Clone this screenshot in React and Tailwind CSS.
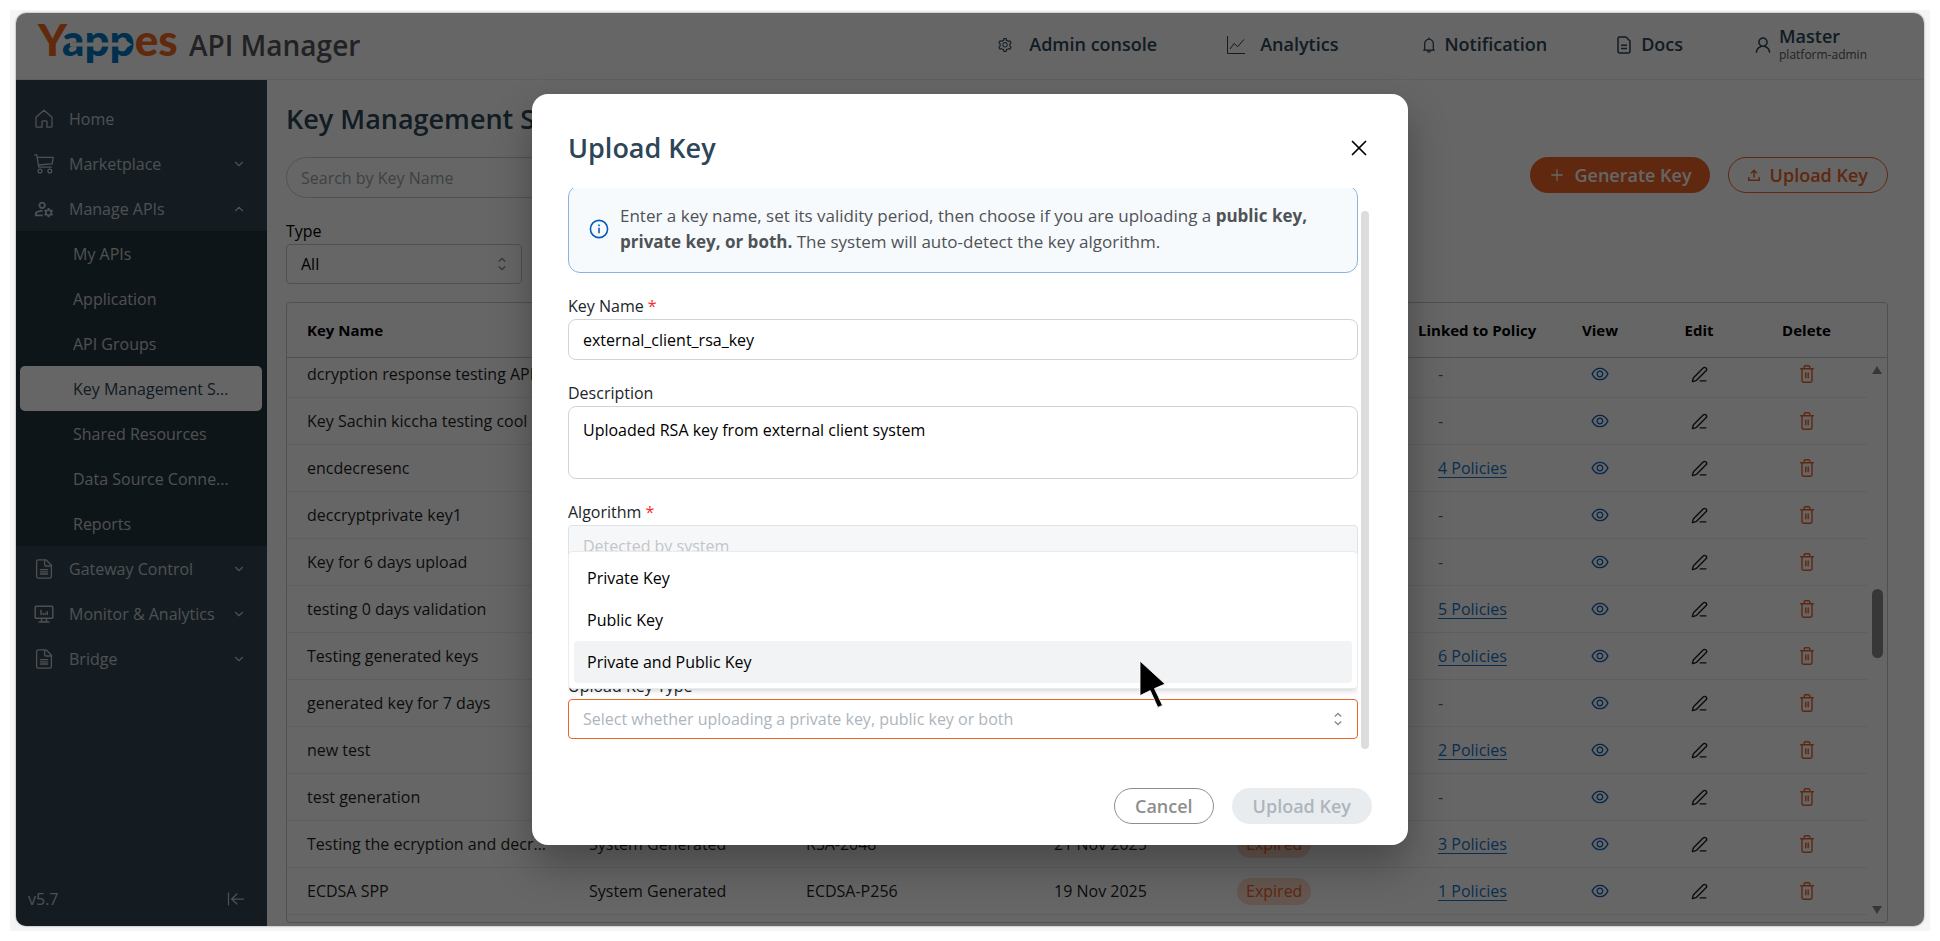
import React from 'react';
import { useState } from 'react';
import {
  AiOutlineBell,
  AiOutlineEye,
  AiOutlineSetting,
  AiOutlineUser,
} from 'react-icons/ai';
import { MdOutlineManageAccounts } from 'react-icons/md';
import { ArrowLeftToLine, ChevronDown, ChevronUp, PenLine, Plus, X } from 'lucide-react';

const manageItems = [
  'My APIs',
  'Application',
  'API Groups',
  'Key Management S...',
  'Shared Resources',
  'Data Source Conne...',
  'Reports',
];

const keys = [
  { name: 'dcryption response testing API', policies: 0 },
  { name: 'Key Sachin kiccha testing cool', policies: 0 },
  { name: 'encdecresenc', policies: 4 },
  { name: 'deccryptprivate key1', policies: 0 },
  { name: 'Key for 6 days upload', policies: 0 },
  { name: 'testing 0 days validation', policies: 5 },
  { name: 'Testing generated keys', policies: 6 },
  { name: 'generated key for 7 days', policies: 0 },
  { name: 'new test', policies: 2 },
  { name: 'test generation', policies: 0 },
  {
    name: 'Testing the ecryption and decr...',
    type: 'System Generated',
    algorithm: 'RSA-2048',
    expiry: '21 Nov 2025',
    status: 'Expired',
    policies: 3,
  },
  {
    name: 'ECDSA SPP',
    type: 'System Generated',
    algorithm: 'ECDSA-P256',
    expiry: '19 Nov 2025',
    status: 'Expired',
    policies: 1,
  },
];

const keyTypes = ['Private Key', 'Public Key', 'Private and Public Key'];

const rowGrid = 'mr-[19px] grid grid-cols-[302fr_217fr_248fr_183fr_201fr_113fr_98fr_100fr_119fr] items-center';

/* ---------- icons ---------- */

const HomeIcon = () => (
  <svg className="size-5" viewBox="0 0 20 20" fill="none" stroke="currentColor" strokeWidth="1.3" strokeLinejoin="round">
    <path d="M2 8.2 10 1.2l8 7V17a1.2 1.2 0 0 1-1.2 1.2H13v-5.4a1 1 0 0 0-1-1H9a1 1 0 0 0-1 1v5.4H3.2A1.2 1.2 0 0 1 2 17z" />
  </svg>
);

const CartIcon = () => (
  <svg className="size-5" viewBox="0 0 20 20" fill="none" stroke="currentColor" strokeWidth="1.3" strokeLinejoin="round" strokeLinecap="round">
    <path d="M.7.8h2l2.1 12.4h12.4M3.2 3.4h16l-1.1 6.4L4.3 11" />
    <circle cx="6" cy="17" r="1.9" />
    <circle cx="15.8" cy="17" r="1.9" />
  </svg>
);

const DocumentIcon = () => (
  <svg className="size-5" viewBox="0 0 20 20" fill="none" stroke="currentColor" strokeWidth="1.3" strokeLinejoin="round" strokeLinecap="round">
    <path d="M12 .8H4.2a1.6 1.6 0 0 0-1.6 1.6v15.2a1.6 1.6 0 0 0 1.6 1.6h11.6a1.6 1.6 0 0 0 1.6-1.6V6.2zM10.6 1v4.8a1.2 1.2 0 0 0 1.2 1.2h5.4M6.4 10.6h7.2M6.4 12.8h7.2M6.4 15h7.2" />
  </svg>
);

const MonitorIcon = () => (
  <svg className="size-5" viewBox="0 0 20 20" fill="none" stroke="currentColor" strokeWidth="1.5" strokeLinejoin="round" strokeLinecap="round">
    <path d="M2 2.2h16a.8.8 0 0 1 .8.8v10.4a.8.8 0 0 1-.8.8H2a.8.8 0 0 1-.8-.8V3a.8.8 0 0 1 .8-.8zM7.6 14.4v3M12.4 14.4v3M5 18h10M7 6.4v4M9.2 9.4v1M11.2 9.4v1M13.2 7.8v2.6" />
  </svg>
);

const GraphIcon = () => (
  <svg className="h-[18px] w-[18px]" viewBox="0 0 18 18" fill="none" stroke="currentColor" strokeWidth="1">
    <path d="M.5 0v17.5H18M3 13l4.2-5.6 3.4 3.4L17 3.4" />
  </svg>
);

const DocsIcon = () => (
  <svg className="h-[18px] w-[14px]" viewBox="0 0 14 18" fill="none" stroke="currentColor" strokeWidth="1.5" strokeLinejoin="round">
    <path d="M9 1H2.4A1.4 1.4 0 0 0 1 2.4v13.2A1.4 1.4 0 0 0 2.4 17h9.2a1.4 1.4 0 0 0 1.4-1.4V5zM4 9.2h6M4 12.6h6" />
  </svg>
);

const UploadIcon = () => (
  <svg className="h-3 w-3" viewBox="0 0 12 12" fill="none" stroke="currentColor" strokeWidth="1.5">
    <path d="M.8 8v3.2h10.4V8M6 8.4V1.4M3 4.2l3-3 3 3" />
  </svg>
);

const TrashIcon = () => (
  <svg className="h-[18px] w-[14px]" viewBox="0 0 14 18" fill="none" stroke="currentColor" strokeWidth="1.4" strokeLinecap="round" strokeLinejoin="round">
    <path d="M.7 3.8h12.6M2 3.8v12a1.4 1.4 0 0 0 1.4 1.4h7.2a1.4 1.4 0 0 0 1.4-1.4v-12M4.2 3.8V2A1.2 1.2 0 0 1 5.4.8h3.2A1.2 1.2 0 0 1 9.8 2v1.8M5.8 8v4.8M8.2 8v4.8" />
  </svg>
);

const InfoIcon = () => (
  <svg className="h-5 w-5 shrink-0 text-[#0a5bb5]" viewBox="0 0 20 20" fill="none" stroke="currentColor" strokeWidth="1.6">
    <circle cx="10" cy="10" r="8.6" />
    <path d="M10 8.8v5.4M10 5.4v1.8" />
  </svg>
);

const SelectorIcon = () => (
  <svg
    className="pointer-events-none absolute top-1/2 right-4 h-[14px] w-2 -translate-y-1/2 text-[#868e96]"
    viewBox="0 0 8 14"
    fill="none"
    stroke="currentColor"
    strokeWidth="1.4"
  >
    <path d="M.8 4.6 4 1.4l3.2 3.2M.8 9.4 4 12.6l3.2-3.2" />
  </svg>
);

const Logo = () => (
  <svg
    className="h-[60px] w-[142px] overflow-visible"
    viewBox="0 -8 142 60"
    role="img"
    aria-label="Yappes"
    fontFamily="Lato, sans-serif"
    fontWeight="900"
  >
    <text x="0" y="33" fontSize="44" fill="#f26a21">
      Y<tspan fill="#0078c0">app</tspan>es
    </text>
    <path d="M32 19.4h53v-3.6l9 5.6-9 5.6v-3.6H32z" fill="#fff" />
  </svg>
);

/* ---------- layout ---------- */

const Header = () => (
  <header className="flex h-[67px] shrink-0 items-center justify-between border-b border-[#eeeeee] bg-white pr-[57px] pb-[3px] pl-[22px] text-[#2c4657]">
    <div className="flex items-center gap-[9px]">
      <Logo />
      <span className="text-[28px] font-semibold text-[#55565a]">API Manager</span>
    </div>
    <nav className="flex items-center gap-[70px] text-[18px] font-semibold">
      <a href="#admin" className="flex items-center gap-4">
        <AiOutlineSetting className="size-4" />
        Admin console
      </a>
      <a href="#analytics" className="mr-3 flex items-center gap-[15px]">
        <GraphIcon />
        Analytics
      </a>
      <a href="#notification" className="flex items-center gap-[6px]">
        <AiOutlineBell className="size-[18px]" />
        Notification
      </a>
      <a href="#docs" className="flex items-center gap-[10px]">
        <DocsIcon />
        Docs
      </a>
      <a href="#profile" className="flex items-center gap-[6px]">
        <AiOutlineUser className="size-5" />
        <span className="flex flex-col">
          <span className="leading-5">Master</span>
          <span className="text-[12px] leading-[18px] font-normal text-[#55565a]">platform-admin</span>
        </span>
      </a>
    </nav>
  </header>
);

const SidebarItem = ({ icon, label, chevron }) => (
  <a href="#menu" className="flex h-[45px] items-center pr-[21px] pl-[18px]">
    <span className="mr-[15px] flex w-5 justify-center">{icon}</span>
    <span className="flex-1">{label}</span>
    {chevron === 'down' && <ChevronDown className="size-3.5" />}
    {chevron === 'up' && <ChevronUp className="size-3.5" />}
  </a>
);

const Sidebar = () => (
  <aside className="flex w-[251px] shrink-0 flex-col bg-[#324654] pt-4 text-[16px] text-[#c3c9ce]">
    <nav>
      <SidebarItem icon={<HomeIcon />} label="Home" />
      <SidebarItem icon={<CartIcon />} label="Marketplace" chevron="down" />
      <SidebarItem icon={<MdOutlineManageAccounts className="size-[22px] shrink-0" />} label="Manage APIs" chevron="up" />
      <div className="bg-[#23353f] pr-[5px] pl-1">
        {manageItems.map((item, i) => (
          <a
            key={item}
            href="#menu"
            className={
              i === 3
                ? 'flex h-[45px] items-center rounded-[5px] bg-white pl-[53px] text-[#2c4657]'
                : 'flex h-[45px] items-center pl-[53px]'
            }
          >
            {item}
          </a>
        ))}
      </div>
      <SidebarItem icon={<DocumentIcon />} label="Gateway Control" chevron="down" />
      <SidebarItem icon={<MonitorIcon />} label="Monitor & Analytics" chevron="down" />
      <SidebarItem icon={<DocumentIcon />} label="Bridge" chevron="down" />
    </nav>
    <div className="mt-auto flex items-center justify-between pr-[21px] pb-[15px] pl-3">
      <span>v5.7</span>
      <button type="button" aria-label="Collapse menu">
        <ArrowLeftToLine className="size-5" strokeWidth={1.5} />
      </button>
    </div>
  </aside>
);

const KeyTable = () => (
  <table className="mt-[18px] flex min-h-0 flex-1 flex-col rounded-[4px] border border-[#c3c7d0] text-left text-[16px] text-[#1f1f1f]">
    <thead className="block border-b border-[#c3c7d0] text-[15px] text-black">
      <tr className={`${rowGrid} h-[54px]`}>
        <th className="pl-5">Key Name</th>
        <th>Type</th>
        <th>Algorithm</th>
        <th>Expiry Date</th>
        <th>Status</th>
        <th className="-ml-5 whitespace-nowrap">Linked to Policy</th>
        <th className="text-center">View</th>
        <th className="text-center">Edit</th>
        <th className="pr-1 text-center">Delete</th>
      </tr>
    </thead>
    <tbody className="relative block min-h-0 flex-1 overflow-hidden">
      {keys.map((key, i) => (
        <tr key={key.name} className={`${rowGrid} h-[47px] border-b border-[#eceef0] ${i === 0 ? '-mt-[7px]' : ''}`}>
          <td className="truncate pl-5">{key.name}</td>
          <td>{key.type}</td>
          <td>{key.algorithm}</td>
          <td>{key.expiry}</td>
          <td>
            {key.status && (
              <span className="inline-block rounded-full bg-[#fcd9c8] px-[9px] leading-[27px] text-[#ee6426]">
                {key.status}
              </span>
            )}
          </td>
          <td className="text-[#1a73c8]">
            {key.policies > 0 ? (
              <a href="#policies" className="underline underline-offset-3">
                {key.policies} Policies
              </a>
            ) : (
              '-'
            )}
          </td>
          <td className="text-[#0a5bb5]">
            <button type="button" aria-label="View key" className="mx-auto block">
              <AiOutlineEye className="size-5" />
            </button>
          </td>
          <td>
            <button type="button" aria-label="Edit key" className="mx-auto block">
              <PenLine className="size-[17px]" />
            </button>
          </td>
          <td className="pr-1 text-[#e8622a]">
            <button type="button" aria-label="Delete key" className="mx-auto block">
              <TrashIcon />
            </button>
          </td>
        </tr>
      ))}
      {/* scrollbar */}
      <tr aria-hidden="true" className="absolute inset-y-0 right-1 block w-3 text-[#8b8b8b]">
        <td className="flex h-full flex-col items-center pt-2 pb-2">
          <svg className="h-2 w-[10px]" viewBox="0 0 10 8" fill="currentColor">
            <path d="M5 0l5 8H0z" />
          </svg>
          <span className="mt-[215px] h-[69px] w-[11px] rounded-full bg-[#8b8b8b]" />
          <svg className="mt-auto h-2 w-[10px]" viewBox="0 0 10 8" fill="currentColor">
            <path d="M5 8l5-8H0z" />
          </svg>
        </td>
      </tr>
    </tbody>
  </table>
);

const KeyManagement = () => (
  <main className="flex min-h-0 min-w-0 flex-1 flex-col pt-[19px] pr-9 pb-[3px] pl-[19px]">
    <h1 className="text-[27px] leading-10 font-semibold text-[#2c4657]">Key Management System</h1>
    <div className="mt-[18px] flex items-start justify-between">
      <input
        type="search"
        aria-label="Search by Key Name"
        placeholder="Search by Key Name"
        className="h-[41px] w-[460px] rounded-full border border-[#c9cdd2] pl-[14px] text-[16px] placeholder:text-[#9aa3ab]"
      />
      <div className="flex gap-[18px] text-[18px] font-semibold">
        <button type="button" className="flex h-9 items-center gap-2 rounded-full bg-[#ee6426] px-[18px] text-white">
          <Plus className="size-[18px]" strokeWidth={1.7} />
          Generate Key
        </button>
        <button
          type="button"
          className="flex h-9 items-center gap-[10px] rounded-full border border-[#ee6426] px-[19px] text-[#ee6426]"
        >
          <UploadIcon />
          Upload Key
        </button>
      </div>
    </div>
    <label htmlFor="type" className="mt-[20px] text-[16px] leading-[26px]">
      Type
    </label>
    <div className="relative w-[236px]">
      <select id="type" className="h-10 w-full appearance-none rounded-[4px] border border-[#c3c7d0] px-[14px] text-[16px]">
        <option>All</option>
      </select>
      <SelectorIcon />
    </div>
    <KeyTable />
  </main>
);

/* ---------- upload modal ---------- */

const inputClass = 'block h-[41px] w-full rounded-[8px] border border-[#ced4da] px-[14px] text-[16px] text-black';

const Field = ({ id, label, required, children }) => (
  <div className="mt-5">
    <label htmlFor={id} className="block text-[16px] leading-[26px] text-[#212529]">
      {label} {required && <span className="text-[#fa2b2b]">*</span>}
    </label>
    {children}
  </div>
);

const UploadKeyModal = () => {
  const [name, setName] = useState('external_client_rsa_key');
  const [description, setDescription] = useState('Uploaded RSA key from external client system');
  const [keyType, setKeyType] = useState('');

  return (
    <div
      role="dialog"
      aria-labelledby="upload-title"
      className="w-[876px] max-w-full rounded-[16px] bg-white shadow-[0_20px_40px_rgba(0,0,0,0.3)]"
    >
      <div className="flex h-[94px] items-center justify-between px-9 pt-[14px]">
        <h2 id="upload-title" className="text-[27px] font-semibold text-[#2c4657]">
          Upload Key
        </h2>
        <button type="button" aria-label="Close" className="text-black">
          <X className="size-[26px]" strokeWidth={1.6} />
        </button>
      </div>

      <div className="flex h-[563px] pr-[39px] pl-9">
        <div className="min-w-0 flex-1 overflow-hidden">
          <div className="-mt-[3px] flex items-center gap-[11px] rounded-[12px] border border-[#8ab4e0] bg-[#f7fafd] px-5 py-[17px]">
            <InfoIcon />
            <p className="text-[17px] leading-[26px] text-[#4f5256]">
              Enter a key name, set its validity period, then choose if you are uploading a{' '}
              <strong>public key, private key, or both.</strong> The system will auto-detect the key algorithm.
            </p>
          </div>

          <Field id="key-name" label="Key Name" required>
            <input id="key-name" value={name} onChange={(e) => setName(e.target.value)} className={inputClass} />
          </Field>
          <Field id="description" label="Description">
            <textarea
              id="description"
              value={description}
              onChange={(e) => setDescription(e.target.value)}
              className="block h-[73px] w-full resize-none rounded-[8px] border border-[#ced4da] px-[14px] py-[11px] text-[16px] leading-[25px] text-black"
            />
          </Field>
          <Field id="algorithm" label="Algorithm" required>
            <input
              id="algorithm"
              disabled
              placeholder="Detected by system"
              className="block h-[41px] w-full rounded-[4px] border border-[#dee2e6] bg-[#f6f7f9] px-[14px] text-[16px] placeholder:text-[#c3c5c8]"
            />
          </Field>
          <Field id="validity" label="Validity Period" required>
            <input id="validity" className={inputClass} />
          </Field>
          <Field id="upload-type" label="Upload Key Type">
            <div className="relative">
              <select
                id="upload-type"
                value={keyType}
                onChange={(e) => setKeyType(e.target.value)}
                className="block h-10 w-full appearance-none rounded-[4px] border border-[#ee6426] px-[14px] text-[16px] text-[#adb5bd]"
              >
                <option value="">Select whether uploading a private key, public key or both</option>
                {keyTypes.map((type) => (
                  <option key={type}>{type}</option>
                ))}
              </select>
              <SelectorIcon />
              <ul className="absolute inset-x-0 bottom-[50px] rounded-[4px] border border-[#e9ecef] bg-white p-[5px] shadow-md">
                {keyTypes.map((type) => (
                  <li key={type}>
                    <button
                      type="button"
                      onClick={() => setKeyType(type)}
                      className={
                        type === 'Private and Public Key'
                          ? 'h-[42px] w-full rounded-[4px] bg-[#f1f3f5] px-[13px] text-left text-[16px]'
                          : 'h-[42px] w-full rounded-[4px] px-[13px] text-left text-[16px]'
                      }
                    >
                      {type}
                    </button>
                  </li>
                ))}
              </ul>
              {/* mouse pointer */}
              <svg className="absolute bottom-[29px] left-[571px] h-[50px] w-[28px]" viewBox="0 0 28 50" aria-hidden="true">
                <path
                  d="M1 1 26 24 15.5 28.6 23.5 45.4 18.8 47.4 11.2 30.6 1 35.6z"
                  fill="#000"
                  stroke="#fff"
                  strokeWidth="0.8"
                />
              </svg>
            </div>
          </Field>
        </div>
        <div className="mt-[23px] ml-[3px] h-[538px] w-2 rounded-full bg-[#dddddd]" />
      </div>

      <div className="flex justify-end gap-[18px] px-9 pt-[37px] pb-[21px] text-[18px] font-semibold">
        <button type="button" className="h-9 rounded-full border border-[#8e8e8e] px-5 text-[#8e8e8e]">
          Cancel
        </button>
        <button type="button" disabled className="h-9 rounded-full bg-[#e9ecef] px-[21px] text-[#adb5bd]">
          Upload Key
        </button>
      </div>
    </div>
  );
};

const App = () => {
  return (
    <div className="flex h-screen flex-col bg-white p-[10px] font-['Open_Sans',sans-serif]">
      <div className="flex min-h-0 flex-1 flex-col bg-[#f5f5f5] px-[6px] pt-[3px] pb-[5px]">
        <div className="relative flex min-h-0 flex-1 flex-col overflow-hidden rounded-[10px] bg-white shadow-[0_0_2px_rgba(0,0,0,0.5)]">
          <Header />
          <div className="flex min-h-0 flex-1">
            <Sidebar />
            <KeyManagement />
          </div>
          <div className="absolute inset-0 flex items-center justify-center bg-black/60">
            <UploadKeyModal />
          </div>
        </div>
      </div>
    </div>
  );
};

export default App;
